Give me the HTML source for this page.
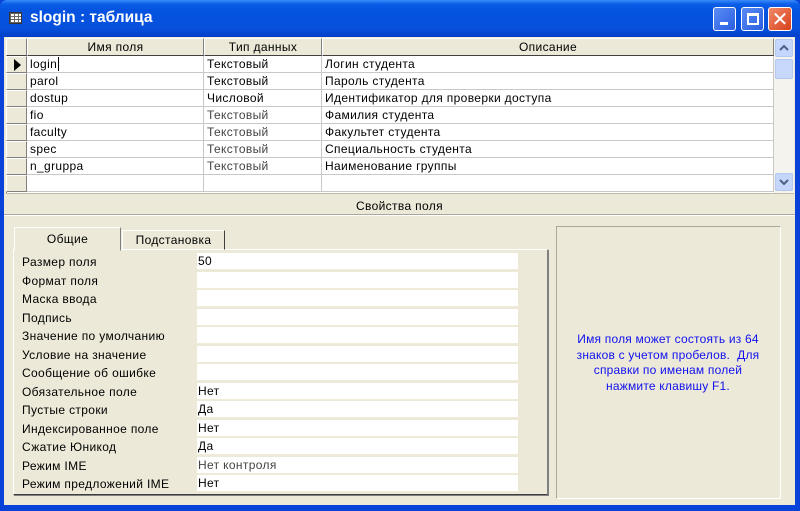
<!DOCTYPE html>
<html><head><meta charset="utf-8"><style>
*{margin:0;padding:0;box-sizing:border-box}
body{width:800px;height:511px;overflow:hidden;background:#0842d8;font-family:"Liberation Sans",sans-serif;font-size:12px;letter-spacing:0.35px;color:#000;position:relative}
.a{position:absolute}
#title{left:0;top:0;width:800px;height:37px;background:linear-gradient(#3a8cf8 0,#0a5ee8 4px,#0553e0 10px,#0650dc 28px,#0340c8 37px);border-radius:7px 7px 0 0}
#body{left:4px;top:37px;width:791px;height:468px;background:#ece9d8}
.btn{top:7px;width:23px;height:24px;border:1px solid #fff;border-radius:3px;background:linear-gradient(135deg,#5a8cf5,#2a5ee0)}
.cell{position:absolute;height:17px;line-height:16px;padding-left:3px;white-space:nowrap;border-right:1px solid #c8c8c8;border-bottom:1px solid #c8c8c8;background:#fff}
.hdr{position:absolute;height:18px;line-height:17px;text-align:center;background:#ece9d8;border-right:1px solid #808080;border-bottom:1px solid #404040;border-top:1px solid #fff;border-left:1px solid #fff}
.sel{position:absolute;left:6px;width:21px;height:17px;background:#ece9d8;border:1px solid;border-color:#fff #808080 #808080 #fff}
.plab{position:absolute;left:22px;line-height:18px;height:18.5px;white-space:nowrap}
.pval{position:absolute;left:197px;width:321px;height:17px;line-height:17px;padding-left:1px;background:#fff;border-bottom:1px solid #f0ecd8}
.g{color:#444}
</style></head><body>
<div id="title" class="a"></div>
<div class="a" style="left:9px;top:12px;width:13px;height:12px;background:#fff;border:1px solid #333;background-image:linear-gradient(#666 1px,transparent 1px),linear-gradient(90deg,#666 1px,transparent 1px);background-size:4px 3px"></div>
<div class="a" style="left:30px;top:9px;color:#fff;font-weight:bold;font-size:15.5px;letter-spacing:0">slogin : таблица</div>
<div class="a btn" style="left:713px"><div class="a" style="left:6px;top:14px;width:8px;height:3px;background:#fff"></div></div>
<div class="a btn" style="left:741px"><div class="a" style="left:5px;top:5px;width:12px;height:12px;border:2px solid #fff;border-top-width:3px"></div></div>
<div class="a btn" style="left:768px;width:24px;background:linear-gradient(135deg,#f08a6a,#d8401a)"><div class="a" style="left:0;top:0;width:22px;height:22px;color:#fff;font-size:20px;line-height:22px;text-align:center;font-family:'DejaVu Sans',sans-serif;letter-spacing:0">✕</div></div>
<div id="body" class="a"></div>

<div class="a" style="left:6px;top:38px;width:768px;height:155px;background:#fff;border-left:1px solid #808080"></div>
<div class="hdr" style="left:6px;top:38px;width:21px"></div>
<div class="hdr" style="left:27px;top:38px;width:177px">Имя поля</div>
<div class="hdr" style="left:204px;top:38px;width:118px">Тип данных</div>
<div class="hdr" style="left:322px;top:38px;width:452px">Описание</div>

<div class="sel" style="top:56px"><div class="a" style="left:7px;top:2px;width:0;height:0;border-top:6px solid transparent;border-bottom:6px solid transparent;border-left:7px solid #000"></div></div>
<div class="cell" style="left:27px;top:56px;width:177px">login<span style="border-left:1px solid #000;margin-left:1px"></span></div><div class="cell" style="left:204px;top:56px;width:118px">Текстовый</div><div class="cell" style="left:322px;top:56px;width:452px">Логин студента</div>
<div class="sel" style="top:73px"></div>
<div class="cell" style="left:27px;top:73px;width:177px">parol</div><div class="cell" style="left:204px;top:73px;width:118px">Текстовый</div><div class="cell" style="left:322px;top:73px;width:452px">Пароль студента</div>
<div class="sel" style="top:90px"></div>
<div class="cell" style="left:27px;top:90px;width:177px">dostup</div><div class="cell" style="left:204px;top:90px;width:118px">Числовой</div><div class="cell" style="left:322px;top:90px;width:452px">Идентификатор для проверки доступа</div>
<div class="sel" style="top:107px"></div>
<div class="cell" style="left:27px;top:107px;width:177px">fio</div><div class="cell g" style="left:204px;top:107px;width:118px">Текстовый</div><div class="cell" style="left:322px;top:107px;width:452px">Фамилия студента</div>
<div class="sel" style="top:124px"></div>
<div class="cell" style="left:27px;top:124px;width:177px">faculty</div><div class="cell g" style="left:204px;top:124px;width:118px">Текстовый</div><div class="cell" style="left:322px;top:124px;width:452px">Факультет студента</div>
<div class="sel" style="top:141px"></div>
<div class="cell" style="left:27px;top:141px;width:177px">spec</div><div class="cell g" style="left:204px;top:141px;width:118px">Текстовый</div><div class="cell" style="left:322px;top:141px;width:452px">Специальность студента</div>
<div class="sel" style="top:158px"></div>
<div class="cell" style="left:27px;top:158px;width:177px">n_gruppa</div><div class="cell g" style="left:204px;top:158px;width:118px">Текстовый</div><div class="cell" style="left:322px;top:158px;width:452px">Наименование группы</div>
<div class="sel" style="top:175px"></div>
<div class="cell" style="left:27px;top:175px;width:177px"></div><div class="cell" style="left:204px;top:175px;width:118px"></div><div class="cell" style="left:322px;top:175px;width:452px"></div>

<div class="a" style="left:774px;top:38px;width:20px;height:155px;background:#f4f3ee"></div>
<div class="a" style="left:775px;top:39px;width:18px;height:18px;border:1px solid #b4c8f0;border-radius:2px;background:#c4d6fc"><svg width="16" height="16" style="position:absolute;left:0;top:0"><path d="M4 10 L8 6 L12 10" stroke="#4d6185" stroke-width="2" fill="none"/></svg></div>
<div class="a" style="left:775px;top:59px;width:18px;height:20px;border:1px solid #b4c8f0;border-radius:2px;background:#c8d8fc"></div>
<div class="a" style="left:775px;top:173px;width:18px;height:18px;border:1px solid #b4c8f0;border-radius:2px;background:#c4d6fc"><svg width="16" height="16" style="position:absolute;left:0;top:0"><path d="M4 6 L8 10 L12 6" stroke="#4d6185" stroke-width="2" fill="none"/></svg></div>

<div class="a" style="left:6px;top:193px;width:788px;height:1px;background:#c0bca8"></div>
<div class="a" style="left:4px;top:199px;width:791px;text-align:center">Свойства поля</div>
<div class="a" style="left:4px;top:214px;width:791px;height:1px;background:#aca899"></div>
<div class="a" style="left:4px;top:215px;width:791px;height:1px;background:#fff"></div>

<div class="a" style="left:13px;top:249px;width:535px;height:246px;border:1px solid;border-color:#fff #808080 #404040 #fff;box-shadow:1px 1px 0 #808080"></div>
<div class="a" style="left:14px;top:227px;width:107px;height:24px;background:#ece9d8;border:1px solid;border-color:#fff #808080 transparent #fff;text-align:center;line-height:22px">Общие</div>
<div class="a" style="left:122px;top:230px;width:103px;height:20px;border:1px solid;border-color:#fff #404040 transparent #fff;text-align:center;line-height:19px">Подстановка</div>

<div class="plab" style="top:253px">Размер поля</div><div class="pval" style="top:253px">50</div>
<div class="plab" style="top:271.5px">Формат поля</div><div class="pval" style="top:271.5px"></div>
<div class="plab" style="top:290px">Маска ввода</div><div class="pval" style="top:290px"></div>
<div class="plab" style="top:308.5px">Подпись</div><div class="pval" style="top:308.5px"></div>
<div class="plab" style="top:327px">Значение по умолчанию</div><div class="pval" style="top:327px"></div>
<div class="plab" style="top:345.5px">Условие на значение</div><div class="pval" style="top:345.5px"></div>
<div class="plab" style="top:364px">Сообщение об ошибке</div><div class="pval" style="top:364px"></div>
<div class="plab" style="top:382.5px">Обязательное поле</div><div class="pval" style="top:382.5px">Нет</div>
<div class="plab" style="top:401px">Пустые строки</div><div class="pval" style="top:401px">Да</div>
<div class="plab" style="top:419.5px">Индексированное поле</div><div class="pval" style="top:419.5px">Нет</div>
<div class="plab" style="top:438px">Сжатие Юникод</div><div class="pval" style="top:438px">Да</div>
<div class="plab" style="top:456.5px">Режим IME</div><div class="pval g" style="top:456.5px">Нет контроля</div>
<div class="plab" style="top:475px">Режим предложений IME</div><div class="pval" style="top:475px">Нет</div>

<div class="a" style="left:556px;top:226px;width:225px;height:273px;border:1px solid;border-color:#aca899 #fff #fff #aca899"></div>
<div class="a" style="left:563px;top:332px;width:210px;text-align:center;color:#1010f0;line-height:15.5px;letter-spacing:0.2px">Имя поля может состоять из 64<br>знаков с учетом пробелов.&nbsp; Для<br>справки по именам полей<br>нажмите клавишу F1.</div>
</body></html>
